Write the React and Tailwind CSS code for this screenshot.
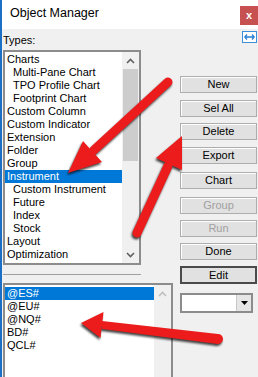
import React from 'react';

const typeItems = [
  { label: 'Charts', indent: false },
  { label: 'Multi-Pane Chart', indent: true },
  { label: 'TPO Profile Chart', indent: true },
  { label: 'Footprint Chart', indent: true },
  { label: 'Custom Column', indent: false },
  { label: 'Custom Indicator', indent: false },
  { label: 'Extension', indent: false },
  { label: 'Folder', indent: false },
  { label: 'Group', indent: false },
  { label: 'Instrument', indent: false, selected: true },
  { label: 'Custom Instrument', indent: true },
  { label: 'Future', indent: true },
  { label: 'Index', indent: true },
  { label: 'Stock', indent: true },
  { label: 'Layout', indent: false },
  { label: 'Optimization', indent: false },
];

const symbols = ['@ES#', '@EU#', '@NQ#', 'BD#', 'QCL#'];

const buttons = [
  { label: 'New', cls: 'mt-[26px]' },
  { label: 'Sel All', cls: 'mt-[7px]' },
  { label: 'Delete', cls: 'mt-[6px]' },
  { label: 'Export', cls: 'mt-[7px]' },
  { label: 'Chart', cls: 'mt-[8px]' },
  { label: 'Group', cls: 'mt-[8px]', disabled: true },
  { label: 'Run', cls: 'mt-[6px]', disabled: true },
  { label: 'Done', cls: 'mt-[6px]' },
];

const Chevron = ({ up, color }) => (
  <svg width="9" height="6" viewBox="0 0 9 6">
    <path
      d={up ? 'M1 5 L4.5 1.5 L8 5' : 'M1 1 L4.5 4.5 L8 1'}
      fill="none"
      stroke={color}
      strokeWidth="1.6"
    />
  </svg>
);

const Arrows = () => (
  <svg
    className="absolute inset-0 pointer-events-none drop-shadow-[-1px_2px_1px_rgba(0,0,0,0.75)]"
    width="258"
    height="377"
    viewBox="0 0 258 377"
  >
    {/* arrow to Instrument */}
    <line x1="166" y1="82" x2="92" y2="150" stroke="#ec1c1c" strokeWidth="9" strokeLinecap="round" />
    <polygon points="66,173 100,162 81,141" fill="#ec1c1c" />
    {/* arrow to Delete */}
    <line x1="135" y1="233" x2="166" y2="166" stroke="#ec1c1c" strokeWidth="9" strokeLinecap="round" />
    <polygon points="180,136 180,170 154,158" fill="#ec1c1c" />
    {/* arrow to symbol list */}
    <polygon points="100,321 216,334 216,344 100,329" fill="#ec1c1c" />
    <circle cx="216" cy="339" r="5" fill="#ec1c1c" />
    <polygon points="79,323 101.5,312 98.5,338" fill="#ec1c1c" />
  </svg>
);

const App = () => {
  return (
    <div className="relative w-[258px] h-[377px] overflow-hidden border-l-2 border-[#1c6fc4] bg-[#f0f0f0] font-['Liberation_Sans',Arial,sans-serif] text-[11px] text-black flex flex-col">
      {/* title bar */}
      <div className="h-[29px] bg-white flex items-start shrink-0">
        <span className="ml-[8px] mt-[6px] text-[12.5px] leading-[15px]">Object Manager</span>
        <div className="ml-auto mt-[6px] w-[18px] h-[19px] bg-[#c75050] text-white font-bold text-[11px] leading-[18px] flex justify-center">
          x
        </div>
      </div>

      {/* header row */}
      <div className="h-[21px] flex justify-between shrink-0">
        <span className="ml-[1px] mt-[5px] leading-[13px]">Types:</span>
        <div className="mt-[2px] mr-[1px] w-[15px] h-[12px] border border-[#3c8fd8] bg-white flex items-center justify-center">
          <svg width="11" height="6" viewBox="0 0 11 6">
            <path d="M3 0.5 L0.8 3 L3 5.5 M8 0.5 L10.2 3 L8 5.5 M1 3 H10" fill="none" stroke="#2a7fd4" strokeWidth="1.3" />
          </svg>
        </div>
      </div>

      <div className="flex flex-1 min-h-0">
        {/* left column */}
        <div className="ml-[1px] w-[170px] flex flex-col">
          <div className="w-[138px] h-[215px] border-2 border-[#8c8c8c] bg-white flex">
            <div className="w-[117px] pt-[1px]">
              {typeItems.map((it) => (
                <div
                  key={it.label}
                  className={`h-[13px] leading-[13px] whitespace-nowrap ${it.indent ? 'pl-[8px]' : 'pl-[2px]'} ${it.selected ? 'bg-[#0078d7] text-white' : ''}`}
                >
                  {it.label}
                </div>
              ))}
            </div>
            <div className="w-[17px] flex flex-col bg-[#f0f0f0]">
              <div className="h-[17px] flex items-center justify-center">
                <Chevron up color="#606060" />
              </div>
              <div className="mx-[1px] h-[92px] bg-[#cdcdcd]" />
              <div className="flex-1" />
              <div className="h-[17px] flex items-center justify-center">
                <Chevron color="#606060" />
              </div>
            </div>
          </div>

          <div className="mt-[9px] w-[138px] h-[2px] border-t border-[#a0a0a0] border-b-white" />

          <div className="mt-[7px] w-[170px] flex-1 border-2 border-b-0 border-[#8c8c8c] bg-white flex">
            <div className="w-[149px] pt-[2px]">
              {symbols.map((s, i) => (
                <div
                  key={s}
                  className={`h-[13px] leading-[13px] pl-[2px] ${i === 0 ? 'bg-[#0078d7] text-white' : ''}`}
                >
                  {s}
                </div>
              ))}
            </div>
            <div className="w-[17px] bg-[#f0f0f0] flex flex-col">
              <div className="h-[17px] flex items-center justify-center">
                <Chevron up color="#bfbfbf" />
              </div>
            </div>
          </div>
        </div>

        {/* right column */}
        <div className="ml-[7px] w-[77px] flex flex-col">
          {buttons.map((b) => (
            <div
              key={b.label}
              className={`${b.cls} h-[17px] border border-[#adadad] bg-[#e1e1e1] shadow-[inset_1px_1px_0_#fff] flex items-center justify-center leading-[13px] ${b.disabled ? 'text-[#a0a0a0]' : ''}`}
            >
              {b.label}
            </div>
          ))}
          <div className="mt-[6px] h-[18px] border-2 border-[#4a4a4a] bg-[#e1e1e1] flex items-center justify-center leading-[13px]">
            Edit
          </div>
          <div className="mt-[9px] w-[73px] h-[20px] border-2 border-[#8c8c8c] bg-white flex justify-end">
            <div className="w-[15px] bg-[#e6e6e6] border-l border-[#c8c8c8] flex items-center justify-center">
              <svg width="7" height="4" viewBox="0 0 7 4">
                <polygon points="0,0 7,0 3.5,4" fill="#000" />
              </svg>
            </div>
          </div>
        </div>
      </div>

      <Arrows />
    </div>
  );
};

export default App;
